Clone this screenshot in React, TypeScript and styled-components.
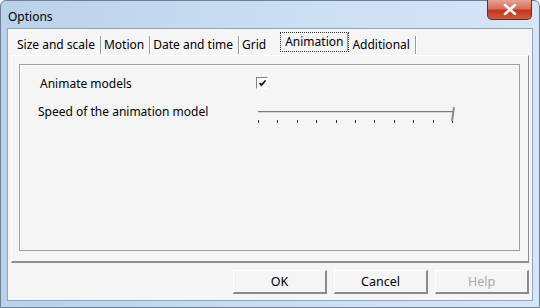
import styled, { createGlobalStyle } from 'styled-components';

const GlobalStyle = createGlobalStyle`
  html, body { margin: 0; padding: 0; }
  body {
    width: 540px;
    height: 308px;
    overflow: hidden;
    font-family: "Liberation Sans", Arial, sans-serif;
  }
`;

const tabs = ['Size and scale', 'Motion', 'Date and time', 'Grid', 'Animation', 'Additional'];
const ticks = Array.from({ length: 11 }, (_, i) => i);

const App = () => {
  return (
    <>
      <GlobalStyle />
      <Window>
        <TitleBar>
          <Title>Options</Title>
          <CloseButton>
            <svg width="14" height="11" viewBox="0 0 14 11">
              <path d="M2 1 L12 10 M12 1 L2 10" stroke="#fff" strokeWidth="2.6" strokeLinecap="round" />
            </svg>
          </CloseButton>
        </TitleBar>
        <Client>
          <TabStrip>
            {tabs.map((t) => (
              <Tab key={t} $active={t === 'Animation'} $plain={t === 'Grid'}>
                {t}
              </Tab>
            ))}
          </TabStrip>
          <TabPanel>
            <GroupBox>
              <Row>
                <Label $indent={20}>Animate models</Label>
                <Checkbox>
                  <svg width="9" height="8" viewBox="0 0 9 8">
                    <path d="M1.5 4 L3.5 6.2 L7.5 1.5" stroke="#111" strokeWidth="1.8" fill="none" />
                  </svg>
                </Checkbox>
              </Row>
              <Row>
                <Label $indent={18}>Speed of the animation model</Label>
                <Slider>
                  <Track />
                  <Thumb />
                  <Ticks>
                    {ticks.map((i) => (
                      <Tick key={i} />
                    ))}
                  </Ticks>
                </Slider>
              </Row>
            </GroupBox>
          </TabPanel>
          <ButtonRow>
            <DlgButton>OK</DlgButton>
            <DlgButton>Cancel</DlgButton>
            <DlgButton disabled>Help</DlgButton>
          </ButtonRow>
        </Client>
      </Window>
    </>
  );
};

export default App;

const Window = styled.div`
  width: 540px;
  height: 308px;
  box-sizing: border-box;
  border: 1px solid #6f8096;
  border-radius: 6px 6px 0 0;
  background: linear-gradient(90deg, #b9d1ea 0%, #c9dcf1 45%, #d6e5f6 100%);
  display: flex;
  flex-direction: column;
  padding: 0 6px 6px 6px;
`;

const TitleBar = styled.div`
  height: 27px;
  display: flex;
  align-items: center;
  justify-content: space-between;
  position: relative;
`;

const Title = styled.span`
  font-family: "Noto Sans", "Liberation Sans", sans-serif;
  font-size: 12px;
  color: #000;
  padding-left: 1px;
  margin-top: 4px;
`;

const CloseButton = styled.div`
  position: absolute;
  right: 1px;
  top: -1px;
  width: 45px;
  height: 20px;
  box-sizing: border-box;
  border: 1px solid #6a2a22;
  border-top: none;
  border-radius: 0 0 5px 5px;
  background: linear-gradient(180deg, #e6a393 0%, #d4705b 45%, #c2371c 55%, #d25a3a 100%);
  display: flex;
  align-items: center;
  justify-content: center;
`;

const Client = styled.div`
  flex: 1;
  background: #f5f5f5;
  border: 1px solid #8ea6c2;
  display: flex;
  flex-direction: column;
  padding: 0 3px 0 3px;
`;

const TabStrip = styled.div`
  height: 25px;
  display: flex;
  align-items: flex-end;
  padding: 0 0 0 3px;
`;

const Tab = styled.div<{ $active?: boolean; $plain?: boolean }>`
  font-family: "Noto Sans", "Liberation Sans", sans-serif;
  font-size: 12px;
  color: #000;
  height: 18px;
  line-height: 17px;
  padding: 0 5px 0 3px;
  margin-bottom: ${(p) => (p.$active ? '3px' : '0')};
  margin-left: ${(p) => (p.$active ? '9px' : '0')};
  margin-right: ${(p) => (p.$active ? '1px' : '0')};
  border-right: 1px solid ${(p) => (p.$plain ? 'transparent' : '#9a9a9a')};
  box-shadow: ${(p) => (p.$plain ? 'none' : '1px 0 0 #ffffff')};
  white-space: nowrap;
  ${(p) =>
    p.$active &&
    `
    outline: 1px dotted #333;
    outline-offset: 0px;
    padding: 0 4px;
  `}
`;

const TabPanel = styled.div`
  flex: 1;
  margin-top: 1px;
  border-right: 1px solid #8c8c8c;
  border-bottom: 2px solid #8c8c8c;
  border-top: 1px solid #ffffff;
  border-left: 1px solid #ffffff;
  padding: 8px 8px 10px 7px;
  display: flex;
`;

const GroupBox = styled.div`
  flex: 1;
  border: 1px solid #a0a0a0;
  box-shadow: inset 1px 1px 0 #ffffff;
  display: flex;
  flex-direction: column;
  padding-top: 10px;
  gap: 7px;
`;

const Row = styled.div`
  display: flex;
  align-items: flex-start;
  height: 21px;
`;

const Label = styled.span<{ $indent: number }>`
  font-family: "Noto Sans", "Liberation Sans", sans-serif;
  font-size: 12px;
  color: #000;
  width: ${(p) => 236 - p.$indent}px;
  padding-left: ${(p) => p.$indent}px;
  white-space: nowrap;
`;

const Checkbox = styled.div`
  width: 12px;
  height: 12px;
  margin-top: 2px;
  box-sizing: border-box;
  border-top: 1px solid #808080;
  border-left: 1px solid #808080;
  border-right: 1px solid #ffffff;
  border-bottom: 1px solid #ffffff;
  background: #fff;
  display: flex;
  align-items: center;
  justify-content: center;
`;

const Slider = styled.div`
  position: relative;
  width: 200px;
  height: 20px;
  margin-left: 2px;
  margin-top: 8px;
`;

const Track = styled.div`
  width: 195px;
  height: 1px;
  background: #7a7a7a;
  border-bottom: 1px solid #d8d8d8;
`;

const Thumb = styled.div`
  position: absolute;
  left: 194px;
  top: -4px;
  width: 2px;
  height: 14px;
  background: #8a8a8a;
  border-radius: 1px;
  transform: skewX(-8deg);
`;

const Ticks = styled.div`
  display: flex;
  justify-content: space-between;
  width: 195px;
  margin-top: 7px;
`;

const Tick = styled.div`
  width: 1px;
  height: 3px;
  background: #333;
`;

const ButtonRow = styled.div`
  height: 37px;
  display: flex;
  justify-content: flex-end;
  align-items: center;
  gap: 7px;
  padding-right: 0;
`;

const DlgButton = styled.button`
  width: 94px;
  height: 24px;
  box-sizing: border-box;
  background: #f5f5f5;
  border: none;
  border-top: 1px solid #ffffff;
  border-left: 1px solid #ffffff;
  border-right: 2px solid #8a8a8a;
  border-bottom: 2px solid #8a8a8a;
  font-family: "Noto Sans", "Liberation Sans", sans-serif;
  font-size: 12.5px;
  color: #000;
  padding: 0;
  &:disabled {
    color: #a8a8a8;
  }
`;
